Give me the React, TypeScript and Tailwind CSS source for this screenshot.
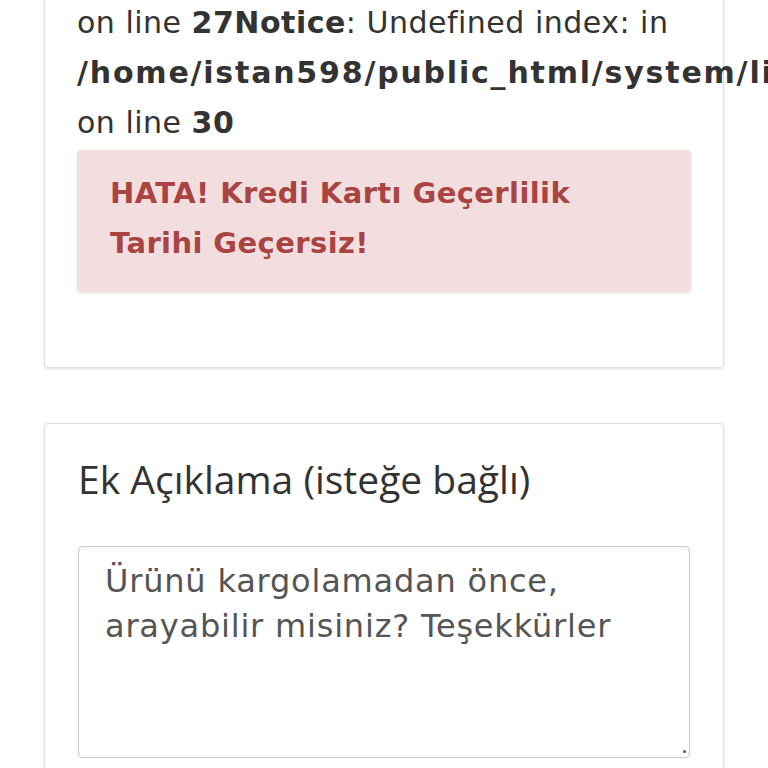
export default function App() {
  return (
    <div className="min-h-screen w-full overflow-hidden bg-white px-[44px] font-['DejaVu_Sans',sans-serif] text-[#333]">
      {/* Hata kartı (üstü kesik) */}
      <div className="-mt-[53px] rounded border border-[#ddd] px-[32px] pb-[75px] shadow-sm">
        <div className="text-[30px] leading-[50px] tracking-[0.5px]">
          <span className="font-bold whitespace-nowrap">/home/istan598/public_html/system/library/cart.php</span>{' '}
          on line <b>27</b>
          <b>Notice</b>: Undefined index: in{' '}
          <b className="whitespace-nowrap tracking-[1.8px]">/home/istan598/public_html/system/library/cart.php</b> on line <b>30</b>
        </div>
        <div className="mt-[2px] rounded-sm bg-[#f2dede] px-[33px] pt-[18px] pb-[24px] text-[29px] leading-[50px] tracking-[0.4px] font-bold text-[#a94442] shadow-sm">
          HATA! Kredi Kartı Geçerlilik
          <br />
          Tarihi Geçersiz!
        </div>
      </div>

      {/* Ek açıklama kartı */}
      <div className="mt-[55px] rounded border border-[#ddd] px-[33px] pt-[31px] pb-[40px] shadow-sm">
        <label className="block font-['Open_Sans',sans-serif] text-[39px] leading-[48px] text-[#333]">
          Ek Açıklama (isteğe bağlı)
        </label>
        <div className="relative mt-[43px]">
          <textarea
            className="block h-[212px] w-full resize-none rounded border border-[#ccc] px-[26px] py-[12px] text-[32px] leading-[45px] tracking-[0.8px] text-[#555] shadow-inner outline-none"
            defaultValue="Ürünü kargolamadan önce, arayabilir misiniz? Teşekkürler"
          />
          <span className="absolute right-[4px] bottom-[5px] h-[3px] w-[3px] rounded-full bg-[#555]" />
        </div>
      </div>
    </div>
  );
}
